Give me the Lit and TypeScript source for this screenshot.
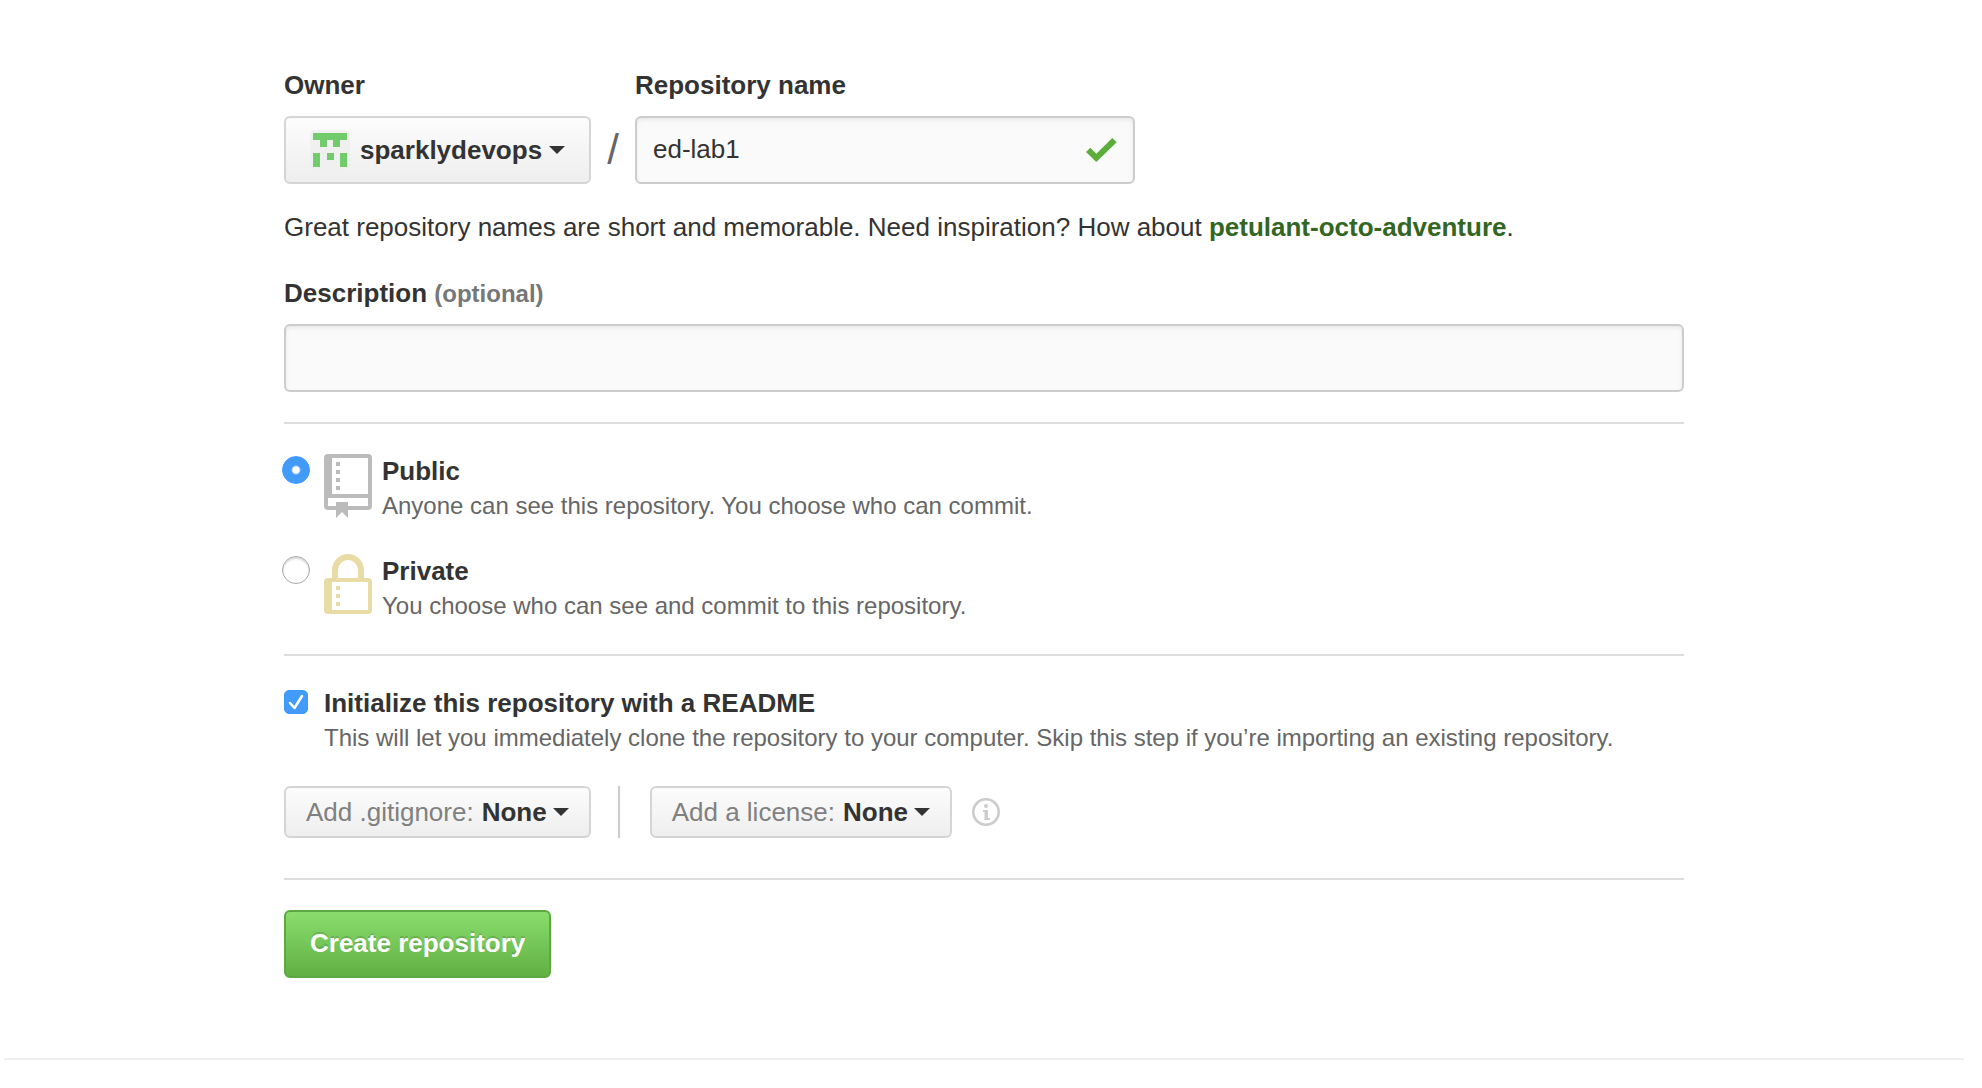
import { LitElement, html, css, svg } from "lit";
import { customElement, property } from "lit/decorators.js";

const caret = html`<svg class="caret" viewBox="0 0 16 8" width="16" height="8" aria-hidden="true">
  <path d="M0 0h16l-8 8z" fill="currentColor" />
</svg>`;

const repoIcon = svg`
  <path fill="#bbb" fill-rule="evenodd" d="M4 0H44Q48 0 48 4V52Q48 56 44 56H24V64L18 58L12 64V56H4Q0 56 0 52V4Q0 0 4 0ZM8 4V40H44V4ZM4 44V52H12V48H24V52H44V44Z" />
  <path fill="#bbb" d="M12 8h4v4h-4zM12 16h4v4h-4zM12 24h4v4h-4zM12 32h4v4h-4z" />`;

const lockIcon = svg`
  <path fill="none" stroke="#e9dba5" stroke-width="6" d="M11 26V16a13 13 0 0 1 26 0V26" />
  <path fill="#e9dba5" fill-rule="evenodd" d="M4 24H44Q48 24 48 28V56Q48 60 44 60H4Q0 60 0 56V28Q0 24 4 24ZM8 28V56H44V28Z" />
  <path fill="#e9dba5" d="M12 32h4v4h-4zM12 40h4v4h-4zM12 48h4v4h-4z" />`;

/** Bevelled drop-down with an optional grey prefix or a leading picture in its slot. */
@customElement("menu-select")
export class MenuSelect extends LitElement {
  @property() prefixText = "";
  @property() value = "";
  @property() label = "";
  @property({ type: Boolean, reflect: true }) large = false;

  static styles = css`
    :host {
      display: inline-block;
    }
    .box {
      display: flex;
      align-items: center;
      box-sizing: border-box;
      height: 52px;
      padding: 0 20px;
      border: 2px solid #d5d5d5;
      border-radius: 6px;
      background: linear-gradient(#fcfcfc, #eee);
      color: #333;
      font: 26px/30px "Liberation Sans", Arial, sans-serif;
      white-space: nowrap;
    }
    :host([large]) .box {
      height: 68px;
      padding: 0 24px;
    }
    .prefix {
      margin-right: 8px;
      color: #808080;
    }
    .picker {
      position: relative;
      display: flex;
    }
    select {
      appearance: none;
      margin: 0;
      padding: 0 22px 0 0;
      border: 0;
      background: transparent;
      color: inherit;
      font: inherit;
      font-weight: bold;
      cursor: pointer;
    }
    .caret {
      position: absolute;
      right: 0;
      top: 11px;
      pointer-events: none;
    }
  `;

  render() {
    return html`<label class="box">
      <slot></slot>
      ${this.prefixText ? html`<span class="prefix">${this.prefixText}</span>` : null}
      <span class="picker">
        <select aria-label=${this.label}>
          <option>${this.value}</option>
        </select>
        ${caret}
      </span>
    </label>`;
  }
}

@customElement("app-root")
export class AppRoot extends LitElement {
  static styles = css`
    :host {
      display: block;
      color: #333;
      background: #fff;
      font: 26px/30px "Liberation Sans", Arial, sans-serif;
    }
    .page {
      padding: 70px 18px 28px 4px;
    }
    form {
      max-width: 1400px;
      margin: 0 auto;
    }
    .row {
      display: flex;
      align-items: flex-end;
    }
    .field {
      display: flex;
      flex-direction: column;
      gap: 16px;
    }
    .title {
      font-weight: bold;
    }
    .optional {
      color: #777;
      font-size: 24px;
      line-height: 1;
    }
    .avatar {
      display: block;
      margin-right: 10px;
    }
    .slash {
      width: 44px;
      text-align: center;
      color: #666;
      font-size: 42px;
      line-height: 68px;
    }
    .name {
      flex: 0 1 500px;
    }
    .entry {
      position: relative;
      display: flex;
    }
    .text {
      box-sizing: border-box;
      width: 100%;
      height: 68px;
      margin: 0;
      padding: 0 16px 2px;
      border: 2px solid #ccc;
      border-radius: 6px;
      background: #fafafa;
      box-shadow: inset 0 2px 4px rgba(0, 0, 0, 0.075);
      color: #333;
      font: inherit;
    }
    .valid {
      position: absolute;
      right: 18px;
      top: 22px;
      pointer-events: none;
    }
    .hint {
      margin: 28px 0 36px;
    }
    .hint a {
      color: #336622;
      font-weight: bold;
      text-decoration: none;
    }
    hr {
      height: 2px;
      margin: 30px 0;
      border: 0;
      background: #ddd;
    }
    .choices {
      display: flex;
      flex-direction: column;
      gap: 33px;
      margin: 0 0 33px;
      padding: 0;
      border: 0;
    }
    .choice {
      display: flex;
      align-items: flex-start;
    }
    .choice .icon {
      flex: none;
      margin: 0 10px 0 14px;
    }
    .copy {
      display: flex;
      flex-direction: column;
      gap: 5px;
      padding-top: 2px;
    }
    .note {
      color: #666;
      font-size: 24px;
    }
    input[type="radio"] {
      appearance: none;
      flex: none;
      box-sizing: border-box;
      width: 28px;
      height: 28px;
      margin: 2px 0 0 -2px;
      border: 1px solid #a8a8a8;
      border-radius: 50%;
      background: #fff;
      box-shadow: inset 0 2px 2px rgba(0, 0, 0, 0.15);
    }
    input[type="radio"]:checked {
      border-color: #3b99fc;
      background: radial-gradient(circle, #fff 3px, #429bf9 5px);
      box-shadow: none;
    }
    .init {
      display: flex;
      align-items: flex-start;
      gap: 16px;
    }
    .tick {
      position: relative;
      display: flex;
      flex: none;
      margin-top: 4px;
    }
    input[type="checkbox"] {
      appearance: none;
      width: 24px;
      height: 24px;
      margin: 0;
      border: 1px solid #a8a8a8;
      border-radius: 5px;
      box-sizing: border-box;
    }
    input[type="checkbox"]:checked {
      border-color: #3b99fc;
      background: #429bf9;
    }
    .tick svg {
      position: absolute;
      inset: 0;
      pointer-events: none;
    }
    .tick input:not(:checked) + svg {
      display: none;
    }
    .extras {
      display: flex;
      align-items: center;
      margin: 33px 0 40px;
    }
    .divider {
      width: 2px;
      height: 52px;
      margin: 0 30px 0 27px;
      background: #ccc;
    }
    .info {
      display: flex;
      margin: 0 0 0 20px;
      padding: 0;
      border: 0;
      background: none;
      cursor: pointer;
    }
    .create {
      display: block;
      box-sizing: border-box;
      height: 68px;
      padding: 0 24px 2px;
      border: 2px solid #5ca941;
      border-radius: 6px;
      background: linear-gradient(#8add6d, #60b044);
      color: #fff;
      font: inherit;
      font-weight: bold;
      text-shadow: 0 -2px 0 rgba(0, 0, 0, 0.15);
      cursor: pointer;
    }
    .footer {
      margin: 80px 0 0;
      background: #eee;
    }
  `;

  private choice(id: string, title: string, note: string, icon: unknown, checked: boolean) {
    return html`<div class="choice">
      <input type="radio" name="visibility" id=${id} ?checked=${checked} />
      <svg class="icon" viewBox="0 0 48 64" width="48" height="64" aria-hidden="true">${icon}</svg>
      <label class="copy" for=${id}>
        <span class="title">${title}</span>
        <span class="note">${note}</span>
      </label>
    </div>`;
  }

  render() {
    return html`<div class="page">
      <form @submit=${(e: Event) => e.preventDefault()}>
        <div class="row">
          <div class="field">
            <span class="title">Owner</span>
            <menu-select large label="Owner" value="sparklydevops">
              <svg class="avatar" viewBox="0 0 40 40" width="40" height="40" aria-hidden="true">
                <rect width="40" height="40" rx="5" fill="#f0f0f0" />
                <path
                  fill="#72cb6a"
                  d="M3 3H37V10H30V17H23V10H17V17H10V10H3ZM3 23H10V37H3ZM17 23H24V30H17ZM30 23H37V37H30Z"
                />
              </svg>
            </menu-select>
          </div>
          <span class="slash">/</span>
          <div class="field name">
            <label class="title" for="repo-name">Repository name</label>
            <div class="entry">
              <input class="text" id="repo-name" type="text" value="ed-lab1" />
              <svg class="valid" viewBox="0 0 31 24" width="31" height="24" aria-hidden="true">
                <path fill="#5bae3c" d="M0 14L4.3 9.7L10.3 15.7L26.3 0L30.7 4.3L10.3 24Z" />
              </svg>
            </div>
          </div>
        </div>
        <p class="hint">
          Great repository names are short and memorable. Need inspiration? How about
          <a href="#suggestion">petulant-octo-adventure</a>.
        </p>
        <div class="field">
          <label class="title" for="description">Description <span class="optional">(optional)</span></label>
          <input class="text" id="description" type="text" />
        </div>
        <hr />
        <fieldset class="choices" aria-label="Visibility">
          ${this.choice("public", "Public", "Anyone can see this repository. You choose who can commit.", repoIcon, true)}
          ${this.choice("private", "Private", "You choose who can see and commit to this repository.", lockIcon, false)}
        </fieldset>
        <hr />
        <div class="init">
          <span class="tick">
            <input type="checkbox" id="readme" checked />
            <svg viewBox="0 0 24 24" width="24" height="24" aria-hidden="true">
              <path d="M6 13L10.500 18L18 6" fill="none" stroke="#fff" stroke-width="2.500" stroke-linecap="round" stroke-linejoin="round" />
            </svg>
          </span>
          <label class="copy" for="readme">
            <span class="title">Initialize this repository with a README</span>
            <span class="note">This will let you immediately clone the repository to your computer. Skip this step if you’re importing an existing repository.</span>
          </label>
        </div>
        <div class="extras">
          <menu-select label="Add .gitignore" prefixText="Add .gitignore:" value="None"></menu-select>
          <span class="divider"></span>
          <menu-select label="Add a license" prefixText="Add a license:" value="None"></menu-select>
          <button class="info" type="button" aria-label="About licenses">
            <svg viewBox="0 0 28 28" width="28" height="28" aria-hidden="true">
              <circle cx="14" cy="14" r="12.700" fill="none" stroke="#ccc" stroke-width="2.600" />
              <circle cx="14" cy="8" r="2" fill="#ccc" />
              <path fill="#ccc" d="M11 12H16V20H18V22H12.500V14H11Z" />
            </svg>
          </button>
        </div>
        <hr />
        <button class="create" type="submit">Create repository</button>
      </form>
      <hr class="footer" />
    </div>`;
  }
}
